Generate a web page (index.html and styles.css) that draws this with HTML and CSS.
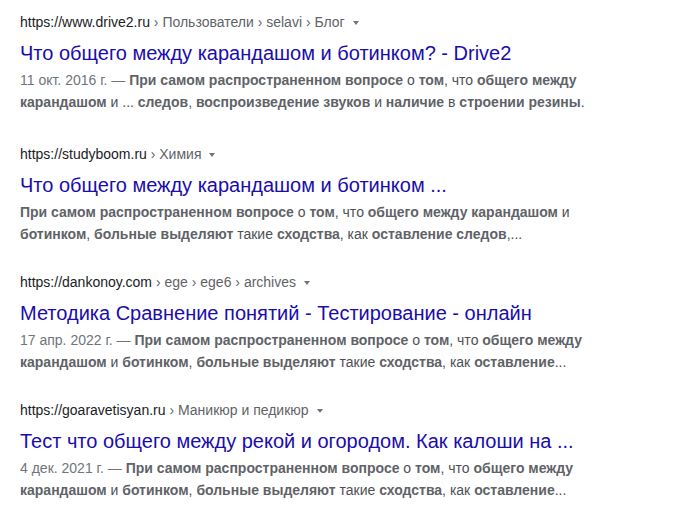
FILE: index.html
```html
<!DOCTYPE html>
<html lang="ru">
<head>
  <meta charset="UTF-8">
  <title>Результаты поиска</title>
<link rel="stylesheet" href="styles.css">
</head>
<body>
  <div class="results">

    <div class="result first">
      <div class="result-url">
        <span class="domain">https://www.drive2.ru</span>
        <span class="path"> › Пользователи › selavi › Блог</span>
        <span class="url-menu"></span>
      </div>
      <h3 class="result-title">Что общего между карандашом и ботинком? - Drive2</h3>
      <div class="result-snippet">
        <span class="date">11 окт. 2016 г. — </span><em>При самом распространенном вопросе</em> о <em>том</em>, что <em>общего между карандашом</em> и ... <em>следов</em>, <em>воспроизведение звуков</em> и <em>наличие</em> в <em>строении резины</em>.
      </div>
    </div>

    <div class="result">
      <div class="result-url">
        <span class="domain">https://studyboom.ru</span>
        <span class="path"> › Химия</span>
        <span class="url-menu"></span>
      </div>
      <h3 class="result-title">Что общего между карандашом и ботинком ...</h3>
      <div class="result-snippet">
        <em>При самом распространенном вопросе</em> о <em>том</em>, что <em>общего между карандашом</em> и <em>ботинком</em>, <em>больные выделяют</em> такие <em>сходства</em>, как <em>оставление следов</em>,...
      </div>
    </div>

    <div class="result">
      <div class="result-url">
        <span class="domain">https://dankonoy.com</span>
        <span class="path"> › ege › ege6 › archives</span>
        <span class="url-menu"></span>
      </div>
      <h3 class="result-title">Методика Сравнение понятий - Тестирование - онлайн</h3>
      <div class="result-snippet">
        <span class="date">17 апр. 2022 г. — </span><em>При самом распространенном вопросе</em> о <em>том</em>, что <em>общего между карандашом</em> и <em>ботинком</em>, <em>больные выделяют</em> такие <em>сходства</em>, как <em>оставление</em>...
      </div>
    </div>

    <div class="result">
      <div class="result-url">
        <span class="domain">https://goaravetisyan.ru</span>
        <span class="path"> › Маникюр и педикюр</span>
        <span class="url-menu"></span>
      </div>
      <h3 class="result-title">Тест что общего между рекой и огородом. Как калоши на ...</h3>
      <div class="result-snippet">
        <span class="date">4 дек. 2021 г. — </span><em>При самом распространенном вопросе</em> о <em>том</em>, что <em>общего между карандашом</em> и <em>ботинком</em>, <em>больные выделяют</em> такие <em>сходства</em>, как <em>оставление</em>...
      </div>
    </div>

  </div>
</body>
</html>
```

FILE: styles.css
```css
/* General Styles */
body {
  font-family: "Liberation Sans", Arial, sans-serif;
  color: #4d5156;
  background-color: #fff;
  margin: 0;
  padding: 13px 20px 0;
}

.results {
  width: 600px;
}

/* Result Block */
.result {
  margin-bottom: 28px;
}

.result.first {
  margin-bottom: 32px;
}

.result-url {
  font-size: 14px;
  line-height: 18px;
  white-space: nowrap;
}

.domain {
  color: #202124;
}

.path {
  color: #5f6368;
}

.url-menu {
  display: inline-block;
  width: 0;
  height: 0;
  margin-left: 4px;
  vertical-align: middle;
  border-left: 3.5px solid transparent;
  border-right: 3.5px solid transparent;
  border-top: 4px solid #70757a;
}

.result-title {
  font-size: 20px;
  font-weight: normal;
  line-height: 26px;
  color: #1a0dab;
  margin: 9px 0 3px;
}

.result-snippet {
  font-size: 14px;
  line-height: 22px;
}

.result-snippet em {
  font-style: normal;
  font-weight: bold;
  color: #5f6368;
}

.date {
  color: #70757a;
}
```
